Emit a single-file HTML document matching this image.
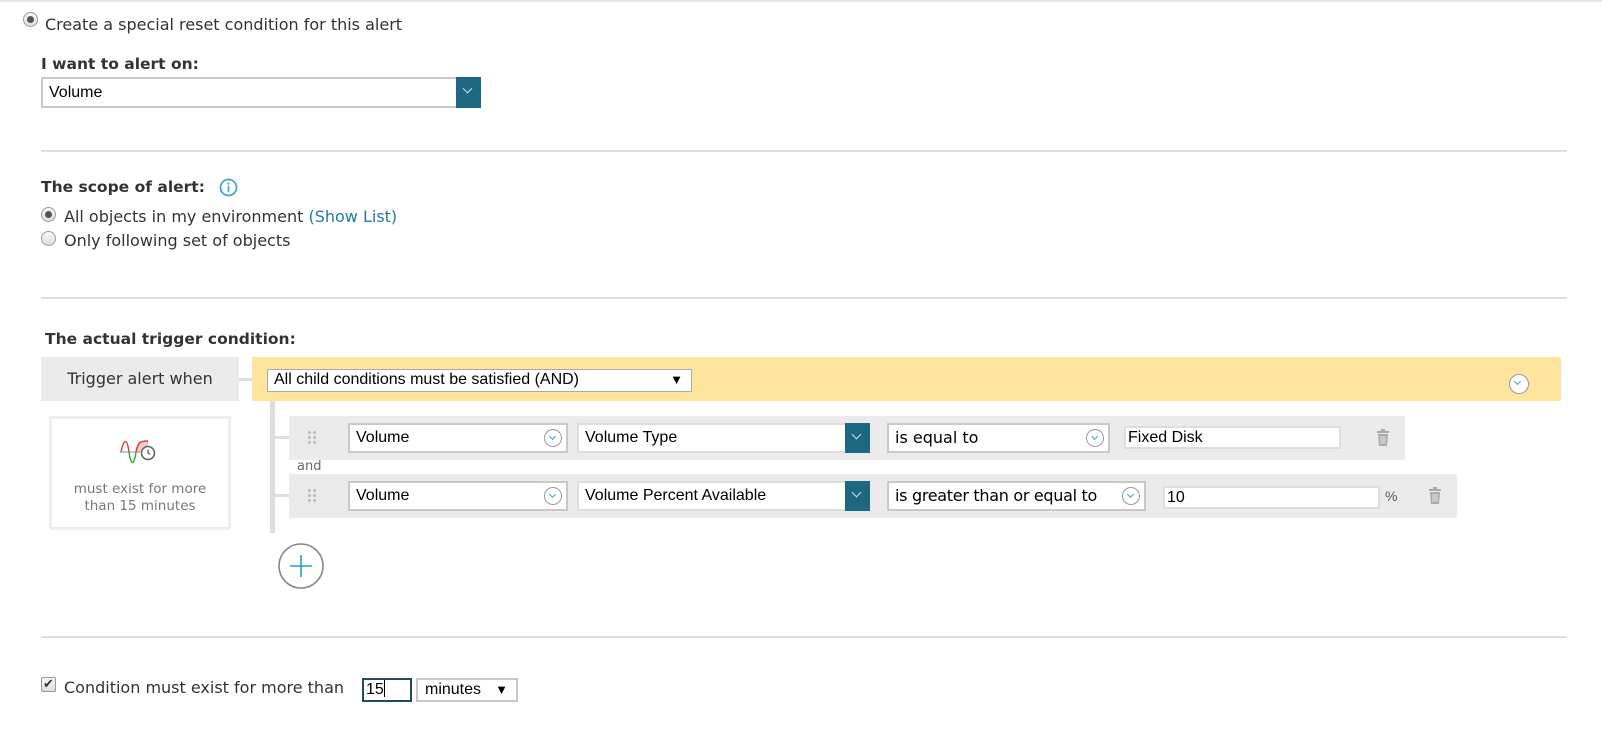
<!DOCTYPE html>
<html><head><style>
*{box-sizing:border-box;margin:0;padding:0}
body{width:1602px;height:747px;background:#fff;position:relative;overflow:hidden;font-family:"Liberation Sans",sans-serif;color:#333}
.a{position:absolute;white-space:nowrap}
.t{font-family:"DejaVu Sans",sans-serif;font-size:16px;line-height:20px}
.b{font-family:"DejaVu Sans",sans-serif;font-weight:bold;font-size:15.5px}
.hr{position:absolute;left:41px;width:1526px;height:2px;background:#dedede}
.radio{position:absolute;width:15px;height:15px;border-radius:50%;border:1px solid #999;background:linear-gradient(#fafafa,#ddd)}
.radio.on::after{content:"";position:absolute;left:3px;top:3px;width:7px;height:7px;border-radius:50%;background:#555}
.sel{position:absolute;background:#fff;border:2px solid #c8c8c8;font-size:16px;color:#000;padding-left:6px;line-height:26px}
.dk{position:absolute;background:#1e6780;top:-2px;bottom:-2px;right:-2px;width:25px}
.dk::after{content:"";position:absolute;left:8px;top:8px;width:6px;height:6px;border-right:1.5px solid #cde;border-bottom:1.5px solid #cde;transform:rotate(45deg)}
.cc{position:absolute;width:18px;height:18px;border:1.5px solid #999;border-radius:50%;background:#fff}
.cc::after{content:"";position:absolute;left:5px;top:3.5px;width:4px;height:4px;border-right:1.5px solid #3aa0c8;border-bottom:1.5px solid #3aa0c8;transform:rotate(45deg)}
.inp{position:absolute;border:2px solid #ddd;background:#fff;font-size:16px;color:#000;padding-left:2px;line-height:19px}
.row{position:absolute;background:#ebebeb;left:289px;height:44px}
.dots{position:absolute;left:18px;top:14px;width:10px;height:16px;background:radial-gradient(circle,#bbb 1.3px,transparent 1.6px) 0 0/5px 5px}
</style></head><body>
<div class="a" style="left:0;top:0;width:1602px;height:3px;background:linear-gradient(#ddd,#fff)"></div>
<div class="radio on" style="left:23px;top:12px"></div>
<div class="a t" style="left:45px;top:15px">Create a special reset condition for this alert</div>
<div class="a b" style="left:41px;top:55px">I want to alert on:</div>
<div class="sel" style="left:41px;top:77px;width:440px;height:31px;line-height:27px">Volume<div class="dk"></div></div>
<div class="hr" style="top:150px"></div>
<div class="a b" style="left:41px;top:178px">The scope of alert:</div>
<svg class="a" style="left:219px;top:178px" width="19" height="19"><circle cx="9.5" cy="9.5" r="8" fill="none" stroke="#4aa3d6" stroke-width="1.8"/><rect x="8.6" y="8" width="1.8" height="6" fill="#4aa3d6"/><circle cx="9.5" cy="5.6" r="1.1" fill="#4aa3d6"/></svg>
<div class="radio on" style="left:41px;top:207px"></div>
<div class="a t" style="left:64px;top:207px">All objects in my environment <span style="color:#1f7aa8">(Show List)</span></div>
<div class="radio" style="left:41px;top:231px"></div>
<div class="a t" style="left:64px;top:231px">Only following set of objects</div>
<div class="hr" style="top:297px"></div>
<div class="a b" style="left:45px;top:330px">The actual trigger condition:</div>
<div class="a t" style="left:41px;top:357px;width:198px;height:44px;background:#ebebeb;line-height:44px;text-align:center">Trigger alert when</div>
<div class="a" style="left:239px;top:378px;width:13px;height:3px;background:#ddd"></div>
<div class="a" style="left:252px;top:357px;width:1309px;height:44px;background:#fee59e"></div>
<div class="sel" style="left:267px;top:369px;width:425px;height:23px;line-height:19px;border:1px solid #aaa;padding-left:6px">All child conditions must be satisfied (AND)<span style="position:absolute;right:8px;font-size:13px">▼</span></div>
<div class="cc" style="left:1509px;top:374px;width:20px;height:20px"></div>
<div class="a" style="left:270px;top:401px;width:5px;height:132px;background:#ddd"></div>
<div class="a" style="left:275px;top:436px;width:14px;height:3px;background:#ddd"></div>
<div class="a" style="left:275px;top:494px;width:14px;height:3px;background:#ddd"></div>
<div class="a" style="left:49px;top:416px;width:182px;height:114px;border:3px solid #eee;text-align:center;color:#777;font-family:'DejaVu Sans',sans-serif;font-size:13.5px;line-height:17px;padding-top:62px;white-space:normal">must exist for more<br>than 15 minutes</div>
<svg class="a" style="left:118px;top:438px" width="40" height="28"><path d="M18 14 C20 4 22 3 30 3 L30 14 Z" fill="#f7c9c9"/><path d="M3 14 C6 0 9 0 11 14" fill="none" stroke="#e23b3b" stroke-width="1.5"/><path d="M11 14 C13 28 16 28 18 14" fill="none" stroke="#3aa83a" stroke-width="1.5"/><path d="M18 14 C20 4 22 3 30 3" fill="none" stroke="#e23b3b" stroke-width="1.5"/><line x1="2" y1="14" x2="22" y2="14" stroke="#888" stroke-width="1"/><circle cx="30" cy="15" r="6.5" fill="#fff" stroke="#666" stroke-width="1.6"/><path d="M30 11.5 V15 L32 16.5" fill="none" stroke="#666" stroke-width="1.3"/></svg>
<div class="row" style="top:416px;width:1116px"><div class="dots"></div></div>
<div class="a" style="left:297px;top:459px;font-family:'DejaVu Sans',sans-serif;font-size:13px;color:#666">and</div>
<div class="row" style="top:474px;width:1168px"><div class="dots"></div></div>
<div class="sel" style="left:348px;top:423px;width:220px;height:30px">Volume<div class="cc" style="right:4px;top:4px"></div></div>
<div class="sel" style="left:577px;top:423px;width:293px;height:30px;border-color:#ddd">Volume Type<div class="dk"></div></div>
<div class="sel" style="left:887px;top:423px;width:223px;height:30px;font-family:'DejaVu Sans',sans-serif;font-size:16px">is equal to<div class="cc" style="right:4px;top:4px"></div></div>
<div class="inp" style="left:1124px;top:426px;width:217px;height:23px">Fixed Disk</div>
<svg class="a" style="left:1375px;top:428px" width="16" height="19"><rect x="2" y="3" width="12" height="2" fill="#aaa"/><rect x="6" y="1" width="4" height="2" fill="#aaa"/><path d="M3 6h10l-1 12H4z" fill="#aaa"/><path d="M6 8v8M8 8v8M10 8v8" stroke="#ebebeb" stroke-width="0.9"/></svg>
<div class="sel" style="left:348px;top:481px;width:220px;height:30px">Volume<div class="cc" style="right:4px;top:4px"></div></div>
<div class="sel" style="left:577px;top:481px;width:293px;height:30px;border-color:#ddd">Volume Percent Available<div class="dk"></div></div>
<div class="sel" style="left:887px;top:481px;width:259px;height:30px;font-family:'DejaVu Sans',sans-serif;font-size:16px;letter-spacing:-0.3px">is greater than or equal to<div class="cc" style="right:4px;top:4px"></div></div>
<div class="inp" style="left:1163px;top:486px;width:217px;height:23px">10</div>
<div class="a" style="left:1385px;top:488px;font-size:14px;color:#555">%</div>
<svg class="a" style="left:1427px;top:486px" width="16" height="19"><rect x="2" y="3" width="12" height="2" fill="#aaa"/><rect x="6" y="1" width="4" height="2" fill="#aaa"/><path d="M3 6h10l-1 12H4z" fill="#aaa"/><path d="M6 8v8M8 8v8M10 8v8" stroke="#ebebeb" stroke-width="0.9"/></svg>
<svg class="a" style="left:277px;top:542px" width="48" height="48"><circle cx="24" cy="24" r="22" fill="#fff" stroke="#888" stroke-width="1.6"/><path d="M24 13v22M13 24h22" stroke="#2a9bc6" stroke-width="1.6"/></svg>
<div class="hr" style="top:636px"></div>
<div class="a" style="left:41px;top:677px;width:15px;height:15px;border:1px solid #999;border-radius:2px;background:linear-gradient(#fafafa,#ddd);font-size:13px;line-height:12px;text-align:center;color:#333">✔</div>
<div class="a t" style="left:64px;top:678px">Condition must exist for more than</div>
<div class="inp" style="left:362px;top:678px;width:50px;height:24px;border-color:#234a5e;line-height:20px">15<span style="display:inline-block;width:1px;height:17px;background:#000;vertical-align:-3px"></span></div>
<div class="sel" style="left:416px;top:678px;width:102px;height:24px;line-height:20px;padding-left:7px">minutes<span style="position:absolute;right:8px;font-size:13px">▼</span></div>
</body></html>
